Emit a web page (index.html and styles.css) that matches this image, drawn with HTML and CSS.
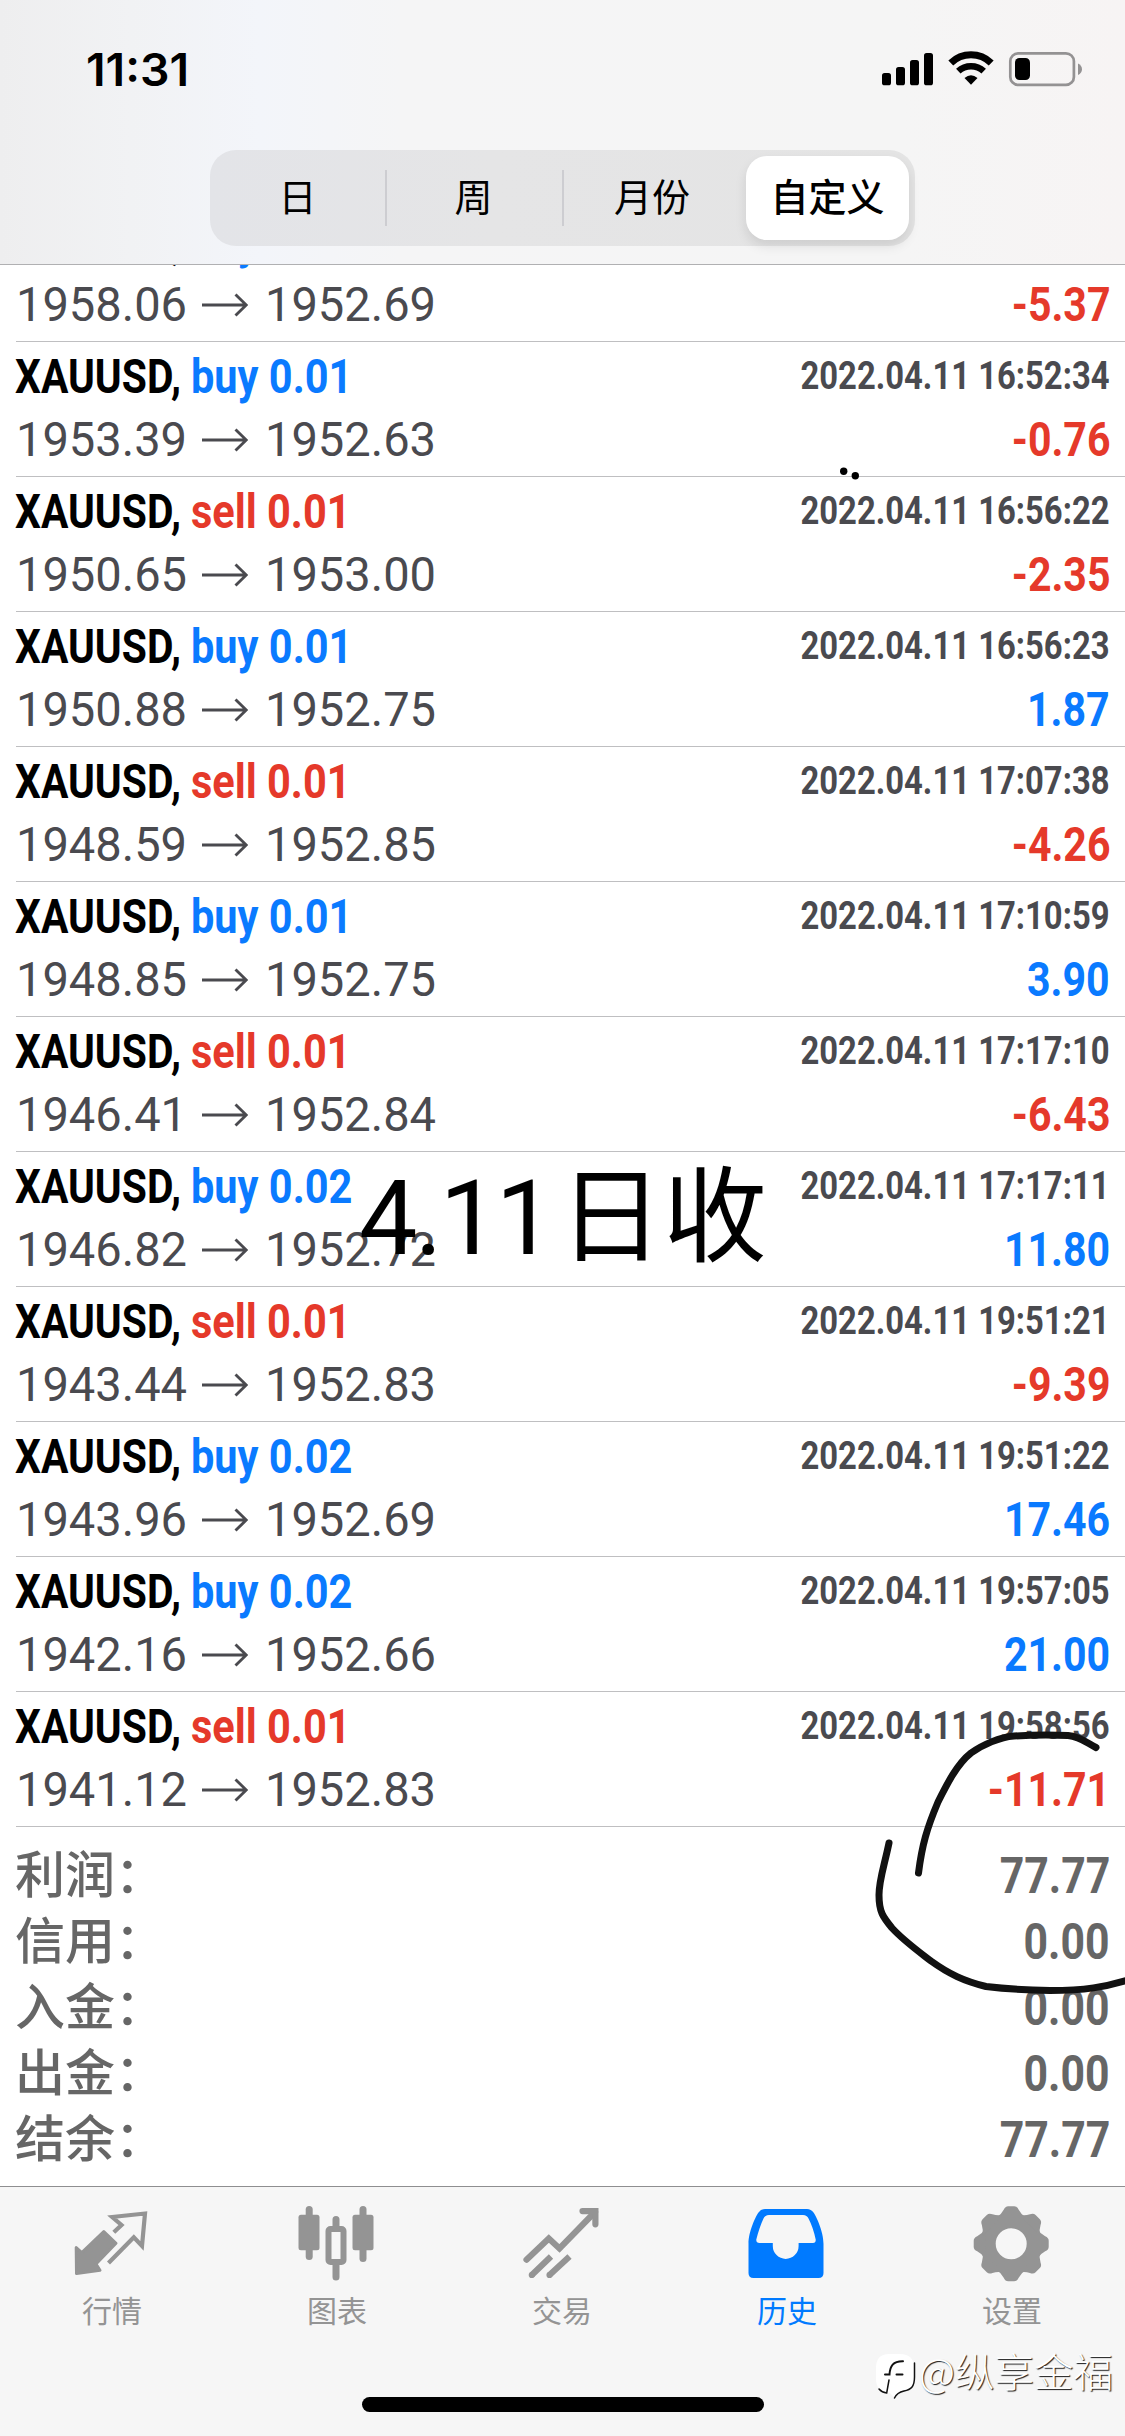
FILE: index.html
```html
<!DOCTYPE html>
<html lang="zh-CN">
<head>
<meta charset="utf-8">
<title>历史</title>
<link rel="stylesheet" href="styles.css">
</head>
<body>
<svg width="0" height="0" class="symbols">
  <symbol id="arrow" viewBox="0 0 46 24">
    <path d="M0 12H44M33.500 1.500L44.300 12L33.500 22.500" fill="none" stroke="currentColor" stroke-width="2.900"/>
  </symbol>
</svg>
<div class="screen">
  <header class="header">
    <div class="status">
      <span class="clock">11:31</span>
      <svg class="status-icons" width="204" height="40" viewBox="0 0 204 40">
        <rect x="0" y="23" width="9" height="12.3" rx="2.6"/>
        <rect x="14" y="17" width="9" height="18.3" rx="2.6"/>
        <rect x="28" y="10" width="9" height="25.3" rx="2.6"/>
        <rect x="42" y="3" width="9" height="32.3" rx="2.6"/>
        <g fill="none" stroke="#000" stroke-width="7">
          <path d="M68.800 13A29 29 0 0 1 109.200 13"/>
          <path d="M76.300 21.200A18.500 18.500 0 0 1 101.700 21.200" stroke-width="6.500"/>
        </g>
        <path d="M82.500 28Q89 22.600 95.500 28L89 34.700Z"/>
        <rect x="128.300" y="3.300" width="63.600" height="31.600" rx="8" fill="none" stroke="#949293" stroke-width="2.700"/>
        <rect x="133" y="8" width="15" height="22" rx="4.500"/>
        <path d="M196 13.500Q200 15.500 200 19.200T196 25Z" fill="#949293"/>
      </svg>
    </div>
    <nav class="segments">
      <span class="segment">日</span>
      <span class="segment segment--ruled">周</span>
      <span class="segment segment--ruled">月份</span>
      <span class="segment segment--active">自定义</span>
    </nav>
  </header>

  <main class="history">
    <article class="deal deal--clipped">
      <div class="line line--title"><span class="symbol">XAUUSD,</span><span class="side buy">buy 0.01</span></div>
      <div class="line line--price"><span class="price">1958.06</span><svg class="arrow"><use href="#arrow"/></svg><span class="price">1952.69</span><span class="amount sell">-5.37</span></div>
    </article>
    <article class="deal">
      <div class="line line--title"><span class="symbol">XAUUSD,</span><span class="side buy">buy 0.01</span><time class="time">2022.04.11 16:52:34</time></div>
      <div class="line line--price"><span class="price">1953.39</span><svg class="arrow"><use href="#arrow"/></svg><span class="price">1952.63</span><span class="amount sell">-0.76</span></div>
    </article>
    <article class="deal">
      <div class="line line--title"><span class="symbol">XAUUSD,</span><span class="side sell">sell 0.01</span><time class="time">2022.04.11 16:56:22</time></div>
      <div class="line line--price"><span class="price">1950.65</span><svg class="arrow"><use href="#arrow"/></svg><span class="price">1953.00</span><span class="amount sell">-2.35</span></div>
    </article>
    <article class="deal">
      <div class="line line--title"><span class="symbol">XAUUSD,</span><span class="side buy">buy 0.01</span><time class="time">2022.04.11 16:56:23</time></div>
      <div class="line line--price"><span class="price">1950.88</span><svg class="arrow"><use href="#arrow"/></svg><span class="price">1952.75</span><span class="amount buy">1.87</span></div>
    </article>
    <article class="deal">
      <div class="line line--title"><span class="symbol">XAUUSD,</span><span class="side sell">sell 0.01</span><time class="time">2022.04.11 17:07:38</time></div>
      <div class="line line--price"><span class="price">1948.59</span><svg class="arrow"><use href="#arrow"/></svg><span class="price">1952.85</span><span class="amount sell">-4.26</span></div>
    </article>
    <article class="deal">
      <div class="line line--title"><span class="symbol">XAUUSD,</span><span class="side buy">buy 0.01</span><time class="time">2022.04.11 17:10:59</time></div>
      <div class="line line--price"><span class="price">1948.85</span><svg class="arrow"><use href="#arrow"/></svg><span class="price">1952.75</span><span class="amount buy">3.90</span></div>
    </article>
    <article class="deal">
      <div class="line line--title"><span class="symbol">XAUUSD,</span><span class="side sell">sell 0.01</span><time class="time">2022.04.11 17:17:10</time></div>
      <div class="line line--price"><span class="price">1946.41</span><svg class="arrow"><use href="#arrow"/></svg><span class="price">1952.84</span><span class="amount sell">-6.43</span></div>
    </article>
    <article class="deal">
      <div class="line line--title"><span class="symbol">XAUUSD,</span><span class="side buy">buy 0.02</span><time class="time">2022.04.11 17:17:11</time></div>
      <div class="line line--price"><span class="price">1946.82</span><svg class="arrow"><use href="#arrow"/></svg><span class="price">1952.72</span><span class="amount buy">11.80</span></div>
    </article>
    <article class="deal">
      <div class="line line--title"><span class="symbol">XAUUSD,</span><span class="side sell">sell 0.01</span><time class="time">2022.04.11 19:51:21</time></div>
      <div class="line line--price"><span class="price">1943.44</span><svg class="arrow"><use href="#arrow"/></svg><span class="price">1952.83</span><span class="amount sell">-9.39</span></div>
    </article>
    <article class="deal">
      <div class="line line--title"><span class="symbol">XAUUSD,</span><span class="side buy">buy 0.02</span><time class="time">2022.04.11 19:51:22</time></div>
      <div class="line line--price"><span class="price">1943.96</span><svg class="arrow"><use href="#arrow"/></svg><span class="price">1952.69</span><span class="amount buy">17.46</span></div>
    </article>
    <article class="deal">
      <div class="line line--title"><span class="symbol">XAUUSD,</span><span class="side buy">buy 0.02</span><time class="time">2022.04.11 19:57:05</time></div>
      <div class="line line--price"><span class="price">1942.16</span><svg class="arrow"><use href="#arrow"/></svg><span class="price">1952.66</span><span class="amount buy">21.00</span></div>
    </article>
    <article class="deal">
      <div class="line line--title"><span class="symbol">XAUUSD,</span><span class="side sell">sell 0.01</span><time class="time">2022.04.11 19:58:56</time></div>
      <div class="line line--price"><span class="price">1941.12</span><svg class="arrow"><use href="#arrow"/></svg><span class="price">1952.83</span><span class="amount sell">-11.71</span></div>
    </article>

    <section class="summary">
      <div class="total"><span class="label">利润：</span><span class="amount">77.77</span></div>
      <div class="total"><span class="label">信用：</span><span class="amount">0.00</span></div>
      <div class="total"><span class="label">入金：</span><span class="amount">0.00</span></div>
      <div class="total"><span class="label">出金：</span><span class="amount">0.00</span></div>
      <div class="total"><span class="label">结余：</span><span class="amount">77.77</span></div>
    </section>
  </main>

  <footer class="tabbar">
    <nav class="tabs">
      <div class="tab">
        <svg class="tab-icon" viewBox="0 0 76 80">
          <path d="M29.800 27.500L42 39.300L22 60L26 66.200L2.500 69.500L2.200 43.500L7.800 48.500Z" fill="currentColor" stroke="currentColor" stroke-width="3" stroke-linejoin="round"/>
          <path d="M39.800 28.300L47.500 21L38.200 13L71 9.500L68 42L59.800 33.300L34.500 59" fill="none" stroke="currentColor" stroke-width="4.200"/>
        </svg>
        <span>行情</span>
      </div>
      <div class="tab">
        <svg class="tab-icon" viewBox="0 0 76 80" fill="currentColor">
          <rect x="-.5" y="10.700" width="21" height="35.500" rx="2.500"/>
          <rect x="6.700" y="2" width="7" height="54" rx="3.500"/>
          <rect x="53.500" y="10.700" width="21" height="35.500" rx="2.500"/>
          <rect x="60.500" y="2" width="7" height="56" rx="3.500"/>
          <rect x="29.500" y="25" width="15" height="33" rx="2" fill="none" stroke="currentColor" stroke-width="6"/>
          <path d="M37 15.500V24M37 60V73" stroke="currentColor" stroke-width="7" stroke-linecap="round"/>
        </svg>
        <span>图表</span>
      </div>
      <div class="tab">
        <svg class="tab-icon" viewBox="0 0 76 80" fill="none" stroke="currentColor" stroke-width="6.200">
          <path d="M2.500 55.700L24.800 34.500L35.500 44.500L71 8" stroke-linecap="round"/>
          <path d="M58.500 7.100H71.400V20.300" stroke-linecap="round"/>
          <path d="M7.800 71L27 52.500M25.500 71L45.500 52.500"/>
          <path d="M7.800 71h.01M25.500 71h.01" stroke-linecap="round"/>
        </svg>
        <span>交易</span>
      </div>
      <div class="tab tab--active">
        <svg class="tab-icon" viewBox="0 0 76 80">
          <path fill="currentColor" fill-rule="evenodd" d="M-.5 40C-.5 27 7 12 9.500 8.500Q12 5 16 5H58Q62 5 64.500 8.500C67 12 74.500 27 74.500 40V69Q74.500 74 69.500 74H4.500Q-.5 74 -.5 69ZM20 11Q16 11 14.500 14.500Q10.500 23 7.300 35.500Q7 39 10.500 39H23.800V42A12.900 12.900 0 0 0 49.600 42V39H64Q67 39 66.700 35.500Q64 23 59.500 14.500Q58 11 54 11Z"/>
        </svg>
        <span>历史</span>
      </div>
      <div class="tab">
        <svg class="tab-icon" viewBox="0 0 76 80">
          <defs><path id="tooth" d="M-15 -26Q-10 -29 -7.500 -34Q-6 -37.500 -3 -37.500H3Q6 -37.500 7.500 -34Q10 -29 15 -26Z"/></defs>
          <g transform="translate(37.200 39.700)" fill="currentColor">
            <circle r="22.500" fill="none" stroke="currentColor" stroke-width="14"/>
            <use href="#tooth"/><use href="#tooth" transform="rotate(45)"/><use href="#tooth" transform="rotate(90)"/><use href="#tooth" transform="rotate(135)"/>
            <use href="#tooth" transform="rotate(180)"/><use href="#tooth" transform="rotate(225)"/><use href="#tooth" transform="rotate(270)"/><use href="#tooth" transform="rotate(315)"/>
          </g>
        </svg>
        <span>设置</span>
      </div>
    </nav>
    <div class="home-indicator"></div>
  </footer>

  <div class="caption"><span class="caption-number">4.11</span><span class="caption-word">日收</span></div>

  <svg class="ink" width="1125" height="2436" viewBox="0 0 1125 2436">
    <circle cx="843.700" cy="471.300" r="3.700"/>
    <circle cx="855.300" cy="475.700" r="3.700"/>
    <g fill="none" stroke="#111" stroke-width="7" stroke-linecap="round" stroke-linejoin="round">
      <path d="M1096 1747.500C1087 1743 1080 1736.500 1068 1735.500Q1040 1734.500 1014 1736C1000 1737 982 1745 971 1753C957 1764 947 1784 938 1802C927 1828 922 1845 918.500 1873"/>
      <path d="M889 1843C884 1867 879 1880 879 1895C879 1912 883 1917 892 1928C904 1941 918 1951 931 1961C949 1974 964 1981 986 1986.500Q1015 1990 1050 1990.500C1085 1990.500 1105 1987 1128 1980"/>
    </g>
  </svg>

  <div class="watermark">
    <svg class="watermark-logo" width="42" height="48" viewBox="0 0 42 48" fill="none" stroke-linecap="round">
      <path d="M13 0H24Q38 0 38 14V25Q38 34 29 36Q22 37.500 18 43L14 39Q0 38 0 25V14Q0 0 13 0Z" fill="#fff"/>
      <path d="M38.500 9V23C38.500 33 35 35.500 28 37Q21 38.500 18.500 44" stroke="#111" stroke-width="1.500"/>
      <path d="M3 35Q6 38.500 10.700 39L13 26" stroke="#111" stroke-width="1.500"/>
      <path d="M9 20.500H13.500C14 12 17 7 27 7.200M20.500 20.500H26.500" stroke="#111" stroke-width="2"/>
    </svg>
    <span class="watermark-text">@纵享金福</span>
  </div>
</div>
</body>
</html>
```
FILE: styles.css
```css
* { box-sizing: border-box; }

body {
  margin: 0;
  background: #fff;
  font-family: Roboto, "Noto Sans CJK SC", sans-serif;
}

.symbols { display: block; height: 0; }

.screen {
  position: relative;
  display: flex;
  flex-direction: column;
  width: 1125px;
  height: 2436px;
  overflow: hidden;
}

/* Header */
.header {
  display: flex;
  flex-direction: column;
  align-items: center;
  flex: none;
  height: 265px;
  border-bottom: 1px solid #b0b0b2;
  background: linear-gradient(90deg, #eeeeef 0, #f1f2f4 130px, #f3f5fa 260px, #f5f5f6 400px, #f5f5f5 900px, #f7f4f4 100%);
}

.status {
  display: flex;
  justify-content: space-between;
  align-items: center;
  width: 100%;
  height: 150px;
  padding: 0 39px 10px 86px;
}

.clock {
  font: 600 45px/50px Inter, sans-serif;
  transform: scaleX(1.03);
  transform-origin: left;
}

.segments {
  display: flex;
  flex: none;
  width: 705px;
  height: 96px;
  padding: 6px;
  border-radius: 26px;
  background: linear-gradient(90deg, #e3e4e8, #e5e5e6 40%, #e4e4e4);
  font-size: 38px;
  line-height: 85px;
}

.segment {
  width: 169px;
  padding-right: 6px;
  text-align: center;
}

.segment--ruled {
  width: 177px;
  padding-right: 0;
  background: linear-gradient(#cdcdd1, #cdcdd1) 0 50% / 2px 56px no-repeat;
}

.segment--ruled + .segment--ruled {
  width: 184px;
  padding-right: 4px;
}

.segment--active {
  width: 163px;
  padding-right: 0;
  border-radius: 21px;
  background: #fff;
  box-shadow: 0 6px 12px rgba(0, 0, 0, .1);
  font-weight: 500;
}

/* Deal list */
.history {
  display: flex;
  flex: 1;
  flex-direction: column;
  padding-left: 16px;
}

.deal {
  display: flex;
  flex: none;
  flex-direction: column;
  height: 135px;
  padding: 3px 15px 5px 0;
  border-bottom: 1px solid #bfbfc1;
}

.deal--clipped {
  justify-content: flex-end;
  height: 77px;
  padding-top: 0;
  overflow: hidden;
}

.line {
  display: flex;
  flex: none;
  align-items: center;
  height: 63px;
  white-space: nowrap;
  font-size: 48px;
}

.symbol,
.side,
.time,
.amount { font-weight: 700; }

.symbol {
  width: 176px;
  margin-left: -1px;
  transform: scaleX(.85);
  transform-origin: left;
}

.side {
  transform: scaleX(.865);
  transform-origin: left;
}

.time {
  margin: 0 0 2px auto;
  color: #4a4a4f;
  font-size: 39px;
  transform: scaleX(.841);
  transform-origin: right;
}

.price {
  width: 170px;
  color: #4a4a4f;
  transform: scaleX(.98);
  transform-origin: left;
}

.arrow {
  width: 46px;
  height: 24px;
  margin: 0 17px 0 16px;
  color: #4a4a4f;
}

.amount {
  margin-left: auto;
  transform: scaleX(.855);
  transform-origin: right;
}

.buy { color: #0a7aff; }
.sell { color: #e5392a; }

/* Totals */
.summary {
  padding: 16px 15px 0 0;
  color: #666;
}

.total {
  display: flex;
  align-items: center;
  height: 66px;
  font-size: 50px;
}

.label {
  margin-left: -1px;
  font-weight: 500;
  line-height: 66px;
}

/* Tab bar */
.tabbar {
  display: flex;
  flex: none;
  flex-direction: column;
  align-items: center;
  height: 250px;
  border-top: 1px solid #8e8e90;
  background: #f6f6f6;
}

.tabs {
  display: flex;
  width: 100%;
  height: 210px;
}

.tab {
  display: flex;
  flex: 1;
  flex-direction: column;
  align-items: center;
  padding: 17px 1px 0 0;
  color: #949494;
  font-size: 30px;
  line-height: 44px;
}

.tab--active { color: #007aff; }

.tab-icon {
  width: 76px;
  height: 80px;
  margin-bottom: 6px;
  overflow: visible;
}

.home-indicator {
  width: 402px;
  height: 15px;
  border-radius: 8px;
  background: #000;
}

/* Annotations over the page */
.caption {
  position: absolute;
  top: 1154px;
  left: 359px;
  display: flex;
  height: 130px;
  line-height: 130px;
  white-space: nowrap;
}

.caption-number {
  width: 200px;
  font-size: 104px;
  letter-spacing: -2.5px;
}

.caption-word { font-size: 104px; }

.ink {
  position: absolute;
  top: 0;
  left: 0;
}

.watermark {
  position: absolute;
  top: 2354px;
  left: 876px;
  display: flex;
  height: 48px;
}

.watermark-logo { flex: none; }

.watermark-text {
  margin: -4px 0 0 1px;
  color: #fff;
  font: 300 39.500px/40px "Noto Sans CJK SC", sans-serif;
  text-shadow: 1px 1px 1px rgba(0, 0, 0, .9);
  white-space: nowrap;
}
```
